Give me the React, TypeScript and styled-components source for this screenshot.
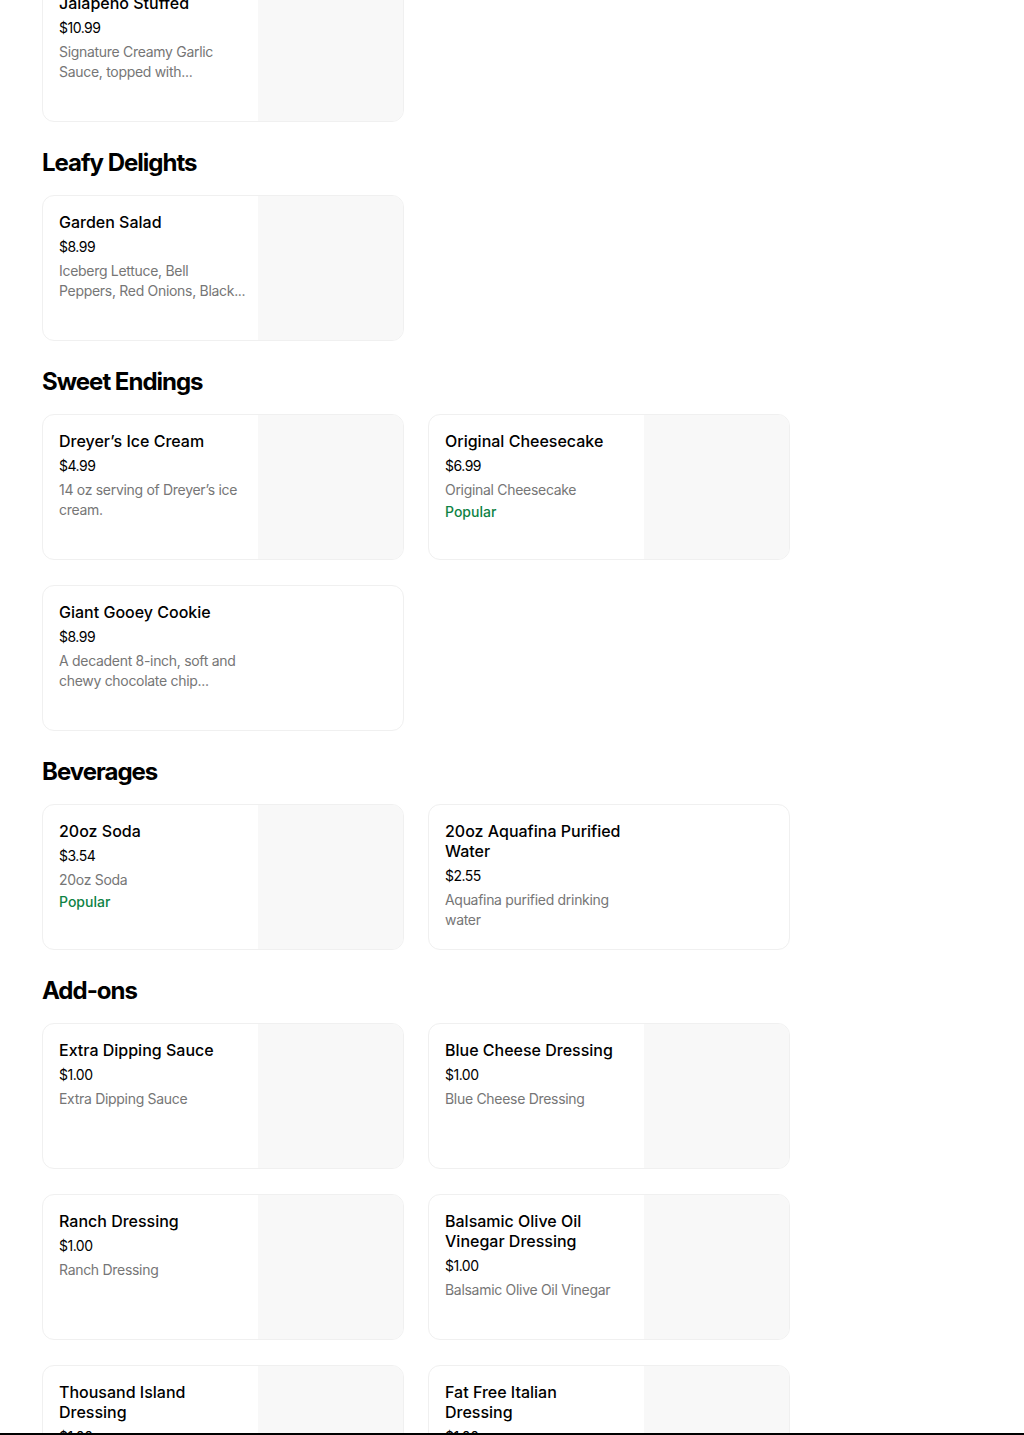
import React from "react";
import styled, { createGlobalStyle } from "styled-components";

const GlobalStyle = createGlobalStyle`
  html, body {
    margin: 0;
    padding: 0;
    background: #ffffff;
  }
  body {
    font-family: Inter, "Noto Sans", "Liberation Sans", sans-serif;
    color: #000000;
    -webkit-font-smoothing: antialiased;
  }
  * { box-sizing: border-box; }
`;

const Page = styled.main`
  display: flex;
  flex-direction: column;
  padding: 0 0 40px 42px;
  margin-top: -24px;
`;

const Section = styled.section`
  display: flex;
  flex-direction: column;
`;

const SectionTitle = styled.h2`
  margin: 25px 0 16px 0;
  font-family: Inter, "Noto Sans", sans-serif;
  font-size: 24px;
  line-height: 32px;
  font-weight: 700;
  letter-spacing: -1px;
  color: #000000;
`;

const Grid = styled.div`
  display: grid;
  grid-template-columns: 362px 362px;
  column-gap: 24px;
  row-gap: 25px;
`;

const Card = styled.div`
  display: flex;
  height: 146px;
  border: 1px solid #f0f0f0;
  border-radius: 12px;
  overflow: hidden;
  background: #ffffff;
`;

const TextCol = styled.div`
  width: 215px;
  flex-shrink: 0;
  padding: 16px 11px 16px 16px;
  display: flex;
  flex-direction: column;
`;

const ItemName = styled.div`
  padding-right: 5px;
  font-size: 16px;
  line-height: 20px;
  font-weight: 500;
  color: #000000;
`;

const Price = styled.div`
  margin-top: 5px;
  font-size: 14px;
  line-height: 20px;
  font-weight: 400;
  color: #000000;
  letter-spacing: -0.5px;
`;

const Description = styled.div`
  margin-top: 4px;
  font-size: 14px;
  line-height: 20px;
  font-weight: 400;
  letter-spacing: -0.3px;
  color: #767676;
  display: -webkit-box;
  -webkit-line-clamp: 2;
  -webkit-box-orient: vertical;
  overflow: hidden;
`;

const Badge = styled.div`
  margin-top: 2px;
  font-size: 14px;
  line-height: 20px;
  font-weight: 500;
  color: #0e8345;
`;

const ImageBox = styled.div`
  flex: 1;
  background: #f8f8f8;
`;

const BottomBar = styled.div`
  position: fixed;
  left: 0;
  right: 0;
  bottom: 0;
  height: 2px;
  background: #000000;
`;

type Item = {
  name: string;
  price: string;
  desc: string;
  popular?: boolean;
  image?: boolean;
};

type Group = { title?: string; items: Item[] };

const groups: Group[] = [
  {
    items: [
      {
        name: "Jalapeno Stuffed",
        price: "$10.99",
        desc: "Signature Creamy Garlic Sauce, topped with...",
        image: true,
      },
    ],
  },
  {
    title: "Leafy Delights",
    items: [
      {
        name: "Garden Salad",
        price: "$8.99",
        desc: "Iceberg Lettuce, Bell Peppers, Red Onions, Black...",
        image: true,
      },
    ],
  },
  {
    title: "Sweet Endings",
    items: [
      {
        name: "Dreyer’s Ice Cream",
        price: "$4.99",
        desc: "14 oz serving of Dreyer’s ice cream.",
        image: true,
      },
      {
        name: "Original Cheesecake",
        price: "$6.99",
        desc: "Original Cheesecake",
        popular: true,
        image: true,
      },
      {
        name: "Giant Gooey Cookie",
        price: "$8.99",
        desc: "A decadent 8-inch, soft and chewy chocolate chip...",
      },
    ],
  },
  {
    title: "Beverages",
    items: [
      {
        name: "20oz Soda",
        price: "$3.54",
        desc: "20oz Soda",
        popular: true,
        image: true,
      },
      {
        name: "20oz Aquafina Purified Water",
        price: "$2.55",
        desc: "Aquafina purified drinking water",
      },
    ],
  },
  {
    title: "Add-ons",
    items: [
      {
        name: "Extra Dipping Sauce",
        price: "$1.00",
        desc: "Extra Dipping Sauce",
        image: true,
      },
      {
        name: "Blue Cheese Dressing",
        price: "$1.00",
        desc: "Blue Cheese Dressing",
        image: true,
      },
      {
        name: "Ranch Dressing",
        price: "$1.00",
        desc: "Ranch Dressing",
        image: true,
      },
      {
        name: "Balsamic Olive Oil Vinegar Dressing",
        price: "$1.00",
        desc: "Balsamic Olive Oil Vinegar",
        image: true,
      },
      {
        name: "Thousand Island Dressing",
        price: "$1.00",
        desc: "Thousand Island Dressing",
        image: true,
      },
      {
        name: "Fat Free Italian Dressing",
        price: "$1.00",
        desc: "Fat Free Italian Dressing",
        image: true,
      },
    ],
  },
];

function MenuCard({ item }: { item: Item }) {
  return (
    <Card>
      <TextCol>
        <ItemName>{item.name}</ItemName>
        <Price>{item.price}</Price>
        <Description>{item.desc}</Description>
        {item.popular && <Badge>Popular</Badge>}
      </TextCol>
      {item.image && <ImageBox />}
    </Card>
  );
}

export default function App() {
  return (
    <>
      <GlobalStyle />
      <Page>
        {groups.map((g, i) => (
          <Section key={i}>
            {g.title && <SectionTitle>{g.title}</SectionTitle>}
            <Grid>
              {g.items.map((it) => (
                <MenuCard key={it.name} item={it} />
              ))}
            </Grid>
          </Section>
        ))}
      </Page>
      <BottomBar />
    </>
  );
}
